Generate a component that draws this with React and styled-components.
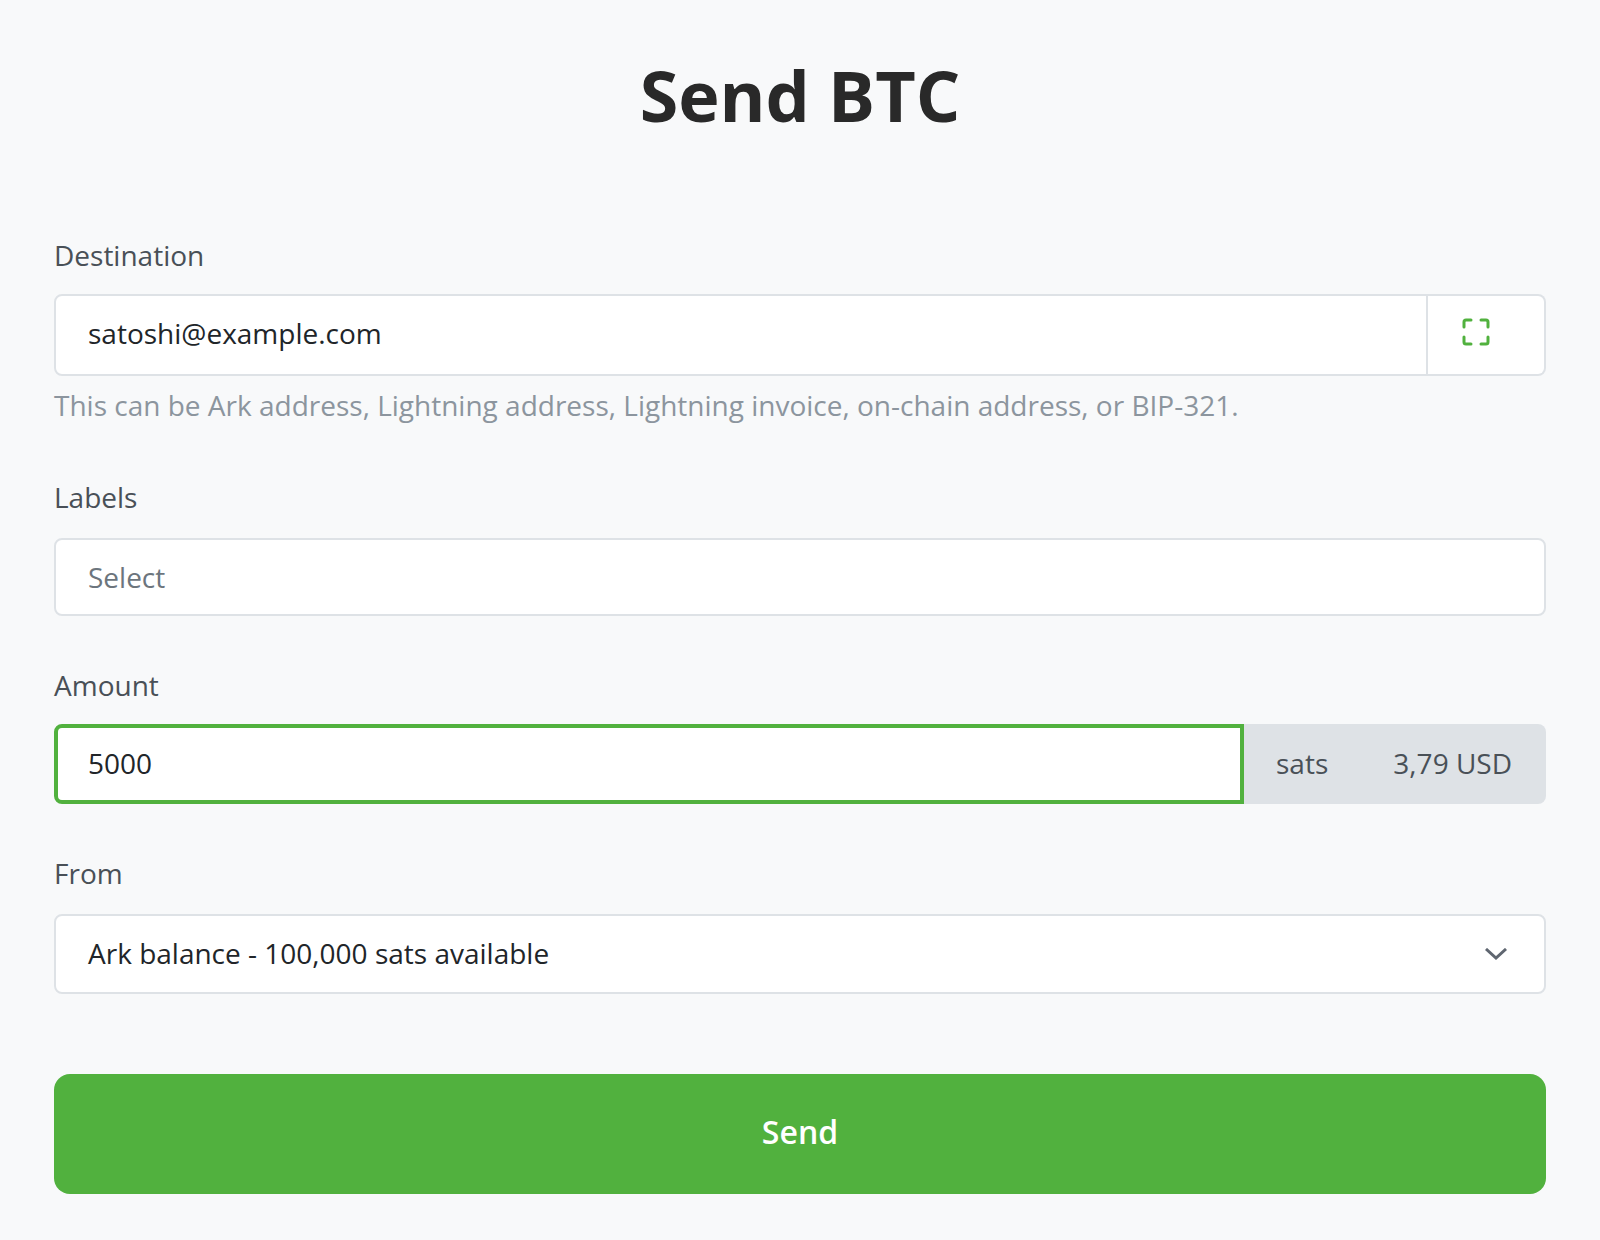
import React from 'react';
import styled, { createGlobalStyle } from 'styled-components';

const GlobalStyle = createGlobalStyle`
  html, body {
    margin: 0;
    padding: 0;
    background: #f8f9fa;
    font-family: "Open Sans", "Noto Sans", sans-serif;
  }
`;

const Page = styled.div`
  width: 1600px;
  height: 1240px;
  box-sizing: border-box;
  padding: 53px 54px 0;
  overflow: hidden;
`;

const Title = styled.h1`
  margin: 0 0 100px;
  text-align: center;
  font-size: 70px;
  line-height: 84px;
  font-weight: 700;
  color: #292929;
`;

const Field = styled.div`
  margin-bottom: ${(p) => p.$gap || 0}px;
`;

const Label = styled.label`
  display: block;
  margin-bottom: ${(p) => p.$gap || 21}px;
  font-size: 28px;
  line-height: 36px;
  color: #495057;
`;

const Group = styled.div`
  display: flex;
`;

const Box = styled.div`
  flex: 1;
  display: flex;
  align-items: center;
  justify-content: space-between;
  box-sizing: border-box;
  height: ${(p) => p.$height || 80}px;
  padding: 0 37px ${(p) => p.$lift || 0}px 32px;
  background: #fff;
  border: 2px solid #dee2e6;
  border-radius: 8px;
  font-size: 28px;
  color: ${(p) => (p.$muted ? '#6c757d' : '#212529')};
`;

const DestinationBox = styled(Box)`
  border-radius: 8px 0 0 8px;
`;

const ScanButton = styled.div`
  display: flex;
  align-items: center;
  justify-content: center;
  box-sizing: border-box;
  width: 118px;
  height: 82px;
  padding: 0 21px 6px 0;
  background: #fff;
  border: 2px solid #dee2e6;
  border-left: none;
  border-radius: 0 8px 8px 0;
`;

const Hint = styled.div`
  margin-top: 11px;
  font-size: 28px;
  line-height: 36px;
  color: #8c959e;
`;

const AmountBox = styled(Box)`
  padding-left: 30px;
  border: 4px solid #51b13e;
  border-radius: 8px 0 0 8px;
`;

const Addon = styled.div`
  display: flex;
  align-items: center;
  justify-content: space-between;
  box-sizing: border-box;
  width: 302px;
  height: 80px;
  padding: 0 34px 2px 32px;
  background: #dee2e6;
  border-radius: 0 8px 8px 0;
  font-size: 28px;
  color: #495057;
`;

const SendButton = styled.button`
  display: block;
  width: 100%;
  height: 120px;
  margin-top: 80px;
  padding-bottom: 6px;
  background: #51b13e;
  border: none;
  border-radius: 16px;
  font-family: inherit;
  font-size: 32px;
  font-weight: 600;
  color: #fff;
`;

const ChevronSvg = styled.svg`
  margin-top: 2px;
`;

const ScanIcon = () => (
  <svg width="28" height="28" viewBox="0 0 28 28" fill="none" stroke="#51b13e" strokeWidth="3" strokeLinecap="round" strokeLinejoin="round">
    <path d="M2 9V4a2 2 0 0 1 2-2h5" />
    <path d="M19 2h5a2 2 0 0 1 2 2v5" />
    <path d="M26 19v5a2 2 0 0 1-2 2h-5" />
    <path d="M9 26H4a2 2 0 0 1-2-2v-5" />
  </svg>
);

const Chevron = () => (
  <ChevronSvg width="22" height="12" viewBox="0 0 22 12" fill="none" stroke="#5f6670" strokeWidth="3">
    <path d="M1 1l10 9 10-9" />
  </ChevronSvg>
);

export default function App() {
  return (
    <>
      <GlobalStyle />
      <Page>
        <Title>Send BTC</Title>
        <Field $gap={56}>
          <Label>Destination</Label>
          <Group>
            <DestinationBox $height={82} $lift={4}>satoshi@example.com</DestinationBox>
            <ScanButton><ScanIcon /></ScanButton>
          </Group>
          <Hint>This can be Ark address, Lightning address, Lightning invoice, on-chain address, or BIP-321.</Hint>
        </Field>
        <Field $gap={51}>
          <Label $gap={23}>Labels</Label>
          <Box $muted $height={78}>Select</Box>
        </Field>
        <Field $gap={51}>
          <Label>Amount</Label>
          <Group>
            <AmountBox $lift={2}>5000</AmountBox>
            <Addon><span>sats</span><span>3,79 USD</span></Addon>
          </Group>
        </Field>
        <Field>
          <Label $gap={23}>From</Label>
          <Box $lift={2}>
            Ark balance - 100,000 sats available
            <Chevron />
          </Box>
        </Field>
        <SendButton>Send</SendButton>
      </Page>
    </>
  );
}
